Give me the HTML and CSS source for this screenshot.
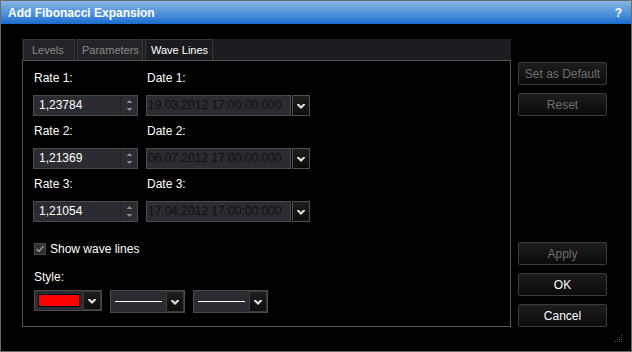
FILE: index.html
```html
<!doctype html>
<html>
  <head>
    <meta charset="utf-8">
    <title>Add Fibonacci Expansion</title>
    <link rel="stylesheet" href="styles.css">
  </head>
  <body>
    <div class="window">
      <div class="titlebar">
        <span class="title">Add Fibonacci Expansion</span>
        <span class="help">?</span>
      </div>
      <div class="main">
        <div class="tabs-area">
          <div class="tabstrip">
            <div class="tab t-levels">Levels</div>
            <div class="tab t-params">Parameters</div>
            <div class="tab t-wave active">Wave Lines</div>
          </div>
          <div class="panel">
            <div class="grid">
              <label class="lbl">Rate 1:</label>
              <label class="lbl">Date 1:</label>
              <div class="spin"><span class="val">1,23784</span><span class="spinbtn"><svg width="7" height="13" viewBox="0 0 7 13"><path d="M3.5 1 L6.5 4 L0.5 4 Z M0.5 9 L6.5 9 L3.5 12 Z" fill="#8c8c8c"/></svg></span></div>
              <div class="combo"><span class="date">19.03.2012 17:00:00:000</span><span class="ddbtn"><svg width="8" height="6" viewBox="0 0 8 6"><path d="M0 1 L2 1 L4 3 L6 1 L8 1 L8 2 L4 6 L0 2 Z" fill="#e0e0e0"/></svg></span></div>

              <label class="lbl gap">Rate 2:</label>
              <label class="lbl gap">Date 2:</label>
              <div class="spin"><span class="val">1,21369</span><span class="spinbtn"><svg width="7" height="13" viewBox="0 0 7 13"><path d="M3.5 1 L6.5 4 L0.5 4 Z M0.5 9 L6.5 9 L3.5 12 Z" fill="#8c8c8c"/></svg></span></div>
              <div class="combo"><span class="date">06.07.2012 17:00:00:000</span><span class="ddbtn"><svg width="8" height="6" viewBox="0 0 8 6"><path d="M0 1 L2 1 L4 3 L6 1 L8 1 L8 2 L4 6 L0 2 Z" fill="#e0e0e0"/></svg></span></div>

              <label class="lbl gap">Rate 3:</label>
              <label class="lbl gap">Date 3:</label>
              <div class="spin"><span class="val">1,21054</span><span class="spinbtn"><svg width="7" height="13" viewBox="0 0 7 13"><path d="M3.5 1 L6.5 4 L0.5 4 Z M0.5 9 L6.5 9 L3.5 12 Z" fill="#8c8c8c"/></svg></span></div>
              <div class="combo"><span class="date">17.04.2012 17:00:00:000</span><span class="ddbtn"><svg width="8" height="6" viewBox="0 0 8 6"><path d="M0 1 L2 1 L4 3 L6 1 L8 1 L8 2 L4 6 L0 2 Z" fill="#e0e0e0"/></svg></span></div>
            </div>

            <div class="check-row">
              <span class="checkbox"><svg width="10" height="10" viewBox="0 0 10 10"><path d="M1.5 5 L4 7.5 L8.5 2" fill="none" stroke="#9a9a9a" stroke-width="1.4"/></svg></span>
              <span>Show wave lines</span>
            </div>

            <label class="lbl style-lbl">Style:</label>
            <div class="style-row">
              <div class="colorpick"><span class="swatch-box"><span class="swatch"></span></span><span class="ddbtn"><svg width="8" height="6" viewBox="0 0 8 6"><path d="M0 1 L2 1 L4 3 L6 1 L8 1 L8 2 L4 6 L0 2 Z" fill="#e0e0e0"/></svg></span></div>
              <div class="linepick"><span class="line-box"><span class="line"></span></span><span class="ddbtn"><svg width="8" height="6" viewBox="0 0 8 6"><path d="M0 1 L2 1 L4 3 L6 1 L8 1 L8 2 L4 6 L0 2 Z" fill="#e0e0e0"/></svg></span></div>
              <div class="linepick"><span class="line-box"><span class="line"></span></span><span class="ddbtn"><svg width="8" height="6" viewBox="0 0 8 6"><path d="M0 1 L2 1 L4 3 L6 1 L8 1 L8 2 L4 6 L0 2 Z" fill="#e0e0e0"/></svg></span></div>
            </div>
          </div>
        </div>

        <div class="buttons">
          <button class="btn disabled">Set as Default</button>
          <button class="btn disabled">Reset</button>
          <div class="spacer"></div>
          <button class="btn disabled">Apply</button>
          <button class="btn">OK</button>
          <button class="btn">Cancel</button>
        </div>
      </div>
      <svg class="grip" width="8" height="8" viewBox="0 0 8 8">
        <rect x="6" y="0" width="1" height="1" fill="#555"/>
        <rect x="4" y="2" width="1" height="1" fill="#555"/><rect x="6" y="2" width="1" height="1" fill="#555"/>
        <rect x="2" y="4" width="1" height="1" fill="#555"/><rect x="4" y="4" width="1" height="1" fill="#555"/><rect x="6" y="4" width="1" height="1" fill="#555"/>
        <rect x="0" y="6" width="1" height="1" fill="#555"/><rect x="2" y="6" width="1" height="1" fill="#555"/><rect x="4" y="6" width="1" height="1" fill="#555"/><rect x="6" y="6" width="1" height="1" fill="#555"/>
      </svg>
    </div>
  </body>
</html>
```

FILE: styles.css
```css
body {
  margin: 0;
  background: #000;
  font-family: "Liberation Sans", Arial, sans-serif;
  font-size: 12px;
  color: #fff;
}

.window {
  position: relative;
  width: 632px;
  height: 352px;
  box-sizing: border-box;
  border: 1px solid #6b6b6b;
  background: #000;
}

.titlebar {
  height: 23px;
  display: flex;
  align-items: center;
  justify-content: space-between;
  padding: 0 9px 0 7px;
  background: linear-gradient(#86b6e4, #4a8ed8 60%, #1a6acf);
}
.title { font-weight: bold; font-size: 12px; }
.help { font-weight: bold; font-size: 12px; }

.main {
  display: flex;
  padding: 15px 0 0 21px;
}

.tabs-area { width: 489px; }

.tabstrip {
  display: flex;
  gap: 2px;
  height: 21px;
  background: #1c1d21;
  padding-left: 1px;
}
.tab {
  font-size: 11px;
  line-height: 20px;
  color: #8a8a8a;
  background: #232428;
  border: 1px solid #38393d;
  border-bottom: none;
  box-sizing: border-box;
  height: 21px;
}
.t-levels { width: 52px; padding-left: 8px; }
.t-params { width: 66px; padding-left: 4px; }
.t-wave { width: 68px; padding-left: 5px; }
.tab.active {
  color: #fff;
  background: #1a1b1e;
}

.panel {
  height: 267px;
  box-sizing: border-box;
  border: 1px solid #545454;
  padding: 10px 0 0 10px;
}

.grid {
  display: grid;
  grid-template-columns: 105px 164px;
  column-gap: 8px;
}
.lbl {
  display: block;
  line-height: 14px;
  padding-left: 1px;
  margin-bottom: 10px;
}
.lbl.gap { margin-top: 8px; }

.spin, .combo {
  height: 21px;
  box-sizing: border-box;
  display: flex;
  background: #2b2c31;
  border: 1px solid #4b4c50;
}
.val {
  flex: 1;
  line-height: 19px;
  padding-left: 5px;
}
.spinbtn {
  width: 16px;
  border-left: 1px solid #24252a;
  display: flex;
  align-items: center;
  justify-content: center;
}
.date {
  flex: 1;
  line-height: 19px;
  padding-left: 1px;
  color: #0e0e0e;
  white-space: nowrap;
  overflow: hidden;
}
.combo { background: none; border: none; gap: 1px; }
.combo .date {
  background: #2b2c31;
  border: 1px solid #4b4c50;
}

.ddbtn {
  width: 18px;
  height: 21px;
  box-sizing: border-box;
  display: flex;
  align-items: center;
  justify-content: center;
  background: linear-gradient(#1e1e1e, #0d0d0d);
  border: 1px solid #505050;
}

.check-row {
  display: flex;
  align-items: center;
  gap: 4px;
  margin-top: 20px;
  line-height: 14px;
  padding-left: 1px;
}
.checkbox {
  width: 12px;
  height: 12px;
  box-sizing: border-box;
  background: #303135;
  border: 1px solid #48494d;
  display: flex;
  align-items: center;
  justify-content: center;
}

.style-lbl { margin-top: 14px; margin-bottom: 6px; }

.style-row {
  display: flex;
  gap: 8px;
  padding-left: 1px;
}
.colorpick, .linepick {
  display: flex;
  box-sizing: border-box;
  background: #2b2c31;
  border: 1px solid #4b4c50;
}
.colorpick { width: 68px; height: 21px; }
.linepick { width: 75px; height: 23px; }
.colorpick .ddbtn, .linepick .ddbtn { height: auto; border-color: #3a3a3a; }
.swatch-box {
  flex: 1;
  display: flex;
  align-items: center;
  padding-left: 3px;
}
.swatch {
  width: 42px;
  height: 13px;
  box-sizing: border-box;
  background: #ff0000;
  border: 1px solid #000;
}
.line-box {
  flex: 1;
  display: flex;
  align-items: center;
  padding-left: 4px;
}
.line {
  width: 47px;
  height: 1px;
  background: #fff;
}

.buttons {
  display: flex;
  flex-direction: column;
  gap: 8px;
  margin-left: 7px;
  padding-top: 23px;
  height: 288px;
  box-sizing: border-box;
}
.spacer { flex: 1; }
.btn {
  width: 89px;
  height: 23px;
  flex: none;
  font-family: "Liberation Sans", Arial, sans-serif;
  font-size: 12px;
  color: #fff;
  background: linear-gradient(#1d1d1d, #0a0a0a);
  border: 1px solid #3c3c3c;
  border-radius: 2px;
  padding: 0;
}
.btn.disabled { color: #6e6e6e; }

.grip {
  position: absolute;
  right: 8px;
  bottom: 8px;
}
```
